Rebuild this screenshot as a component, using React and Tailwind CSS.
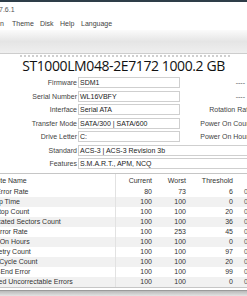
import React from "react";

const info = [
  ["Firmware", "SDM1", "----"],
  ["Serial Number", "WL16VBFY", "----"],
  ["Interface", "Serial ATA", "Rotation Rate"],
  ["Transfer Mode", "SATA/300 | SATA/600", "Power On Count"],
  ["Drive Letter", "C:", "Power On Hours"],
  ["Standard", "ACS-3 | ACS-3 Revision 3b", null],
  ["Features", "S.M.A.R.T., APM, NCQ", null],
];

const attrs = [
  ["Read Error Rate", 80, 73, 6],
  ["Spin-Up Time", 100, 100, 0],
  ["Start/Stop Count", 100, 100, 20],
  ["Reallocated Sectors Count", 100, 100, 36],
  ["Seek Error Rate", 100, 253, 45],
  ["Power-On Hours", 100, 100, 0],
  ["Spin Retry Count", 100, 100, 97],
  ["Power Cycle Count", 100, 100, 20],
  ["End-to-End Error", 100, 100, 99],
  ["Reported Uncorrectable Errors", 100, 100, 0],
];

const App = () => {
  return (
    <div className="w-[247px] h-[296px] overflow-hidden bg-white text-[#333] font-['Liberation_Sans',Arial,sans-serif] text-[7px] leading-none">
      {/* window frame top */}
      <div className="h-[2px] bg-[#2e3d48]" />

      {/* title bar */}
      <div className="h-[15px] flex items-center text-[#555] -ml-[1px]">7.6.1</div>

      {/* menu */}
      <div className="h-[13px] flex items-center text-[#444] whitespace-nowrap">
        <span className="w-[12px] shrink-0">n</span>
        <span className="w-[28px] shrink-0">Theme</span>
        <span className="w-[20px] shrink-0">Disk</span>
        <span className="w-[21px] shrink-0">Help</span>
        <span>Language</span>
      </div>

      {/* disk toolbar */}
      <div className="h-[24px] bg-gradient-to-b from-[#fbfbfb] via-[#e5e5e5] to-[#efefef] border-b border-[#cdcdcd]" />
      <div className="h-[3px] flex items-center">
        <div className="ml-[20px] w-[210px] h-[2px] bg-[repeating-linear-gradient(90deg,#cfcfcf_0_2px,transparent_2px_4px)]" />
      </div>

      {/* model title */}
      <div className="h-[18px] flex items-center justify-center text-[14px] tracking-[-0.4px] text-[#111] font-['Open_Sans','Liberation_Sans',sans-serif]">
        ST1000LM048-2E7172 1000.2 GB
      </div>

      {/* info rows */}
      <div className="flex flex-col pt-[1px]">
        {info.map(([label, value, right]) => (
          <div key={label} className="h-[13.5px] flex items-center whitespace-nowrap">
            <div className="w-[78px] shrink-0 text-right pr-[1px] text-[#444]">{label}</div>
            {right === null ? (
              <div className="w-[175px] shrink-0 h-[11px] border border-[#cfcfcf] flex items-center px-[1px] text-[#222]">
                {value}
              </div>
            ) : (
              <>
                <div className="w-[102px] shrink-0 h-[11px] border border-[#cfcfcf] flex items-center px-[1px] text-[#222]">
                  {value}
                </div>
                <div
                  className={
                    right === "----"
                      ? "w-[65px] shrink-0 text-right text-[#555]"
                      : "w-[72px] shrink-0 text-right text-[#444]"
                  }
                >
                  {right}
                </div>
              </>
            )}
          </div>
        ))}
      </div>

      {/* smart table */}
      <div className="mt-[2px] border-t border-b border-[#c6c6c6] whitespace-nowrap">
        <div className="h-[13px] flex items-center text-[#333]">
          <div className="w-[116px] shrink-0 h-full flex items-center border-r border-[#e2e2e2] overflow-hidden">
            <span className="-ml-[20px]">Attribute Name</span>
          </div>
          <div className="w-[36px] shrink-0 text-right">Current</div>
          <div className="w-[34px] shrink-0 text-right">Worst</div>
          <div className="w-[47px] shrink-0 text-right">Threshold</div>
          <div className="shrink-0 pl-[16px]">Raw Values</div>
        </div>
        {attrs.map(([name, cur, worst, th], i) => (
          <div
            key={name}
            className={
              i % 2 === 1
                ? "h-[10px] flex items-center bg-[#f1f1f1]"
                : "h-[10px] flex items-center bg-white"
            }
          >
            <div className="w-[116px] shrink-0 h-full flex items-center border-r border-[#e2e2e2] overflow-hidden">
              <span className="-ml-[22.5px]">{name}</span>
            </div>
            <div className="w-[36px] shrink-0 text-right">{cur}</div>
            <div className="w-[34px] shrink-0 text-right">{worst}</div>
            <div className="w-[47px] shrink-0 text-right">{th}</div>
            <div className="shrink-0 pl-[11px] text-[#555]">000000000000</div>
          </div>
        ))}
      </div>

      {/* status strip */}
      <div className="h-[2px]" />
      <div className="h-[6px] bg-gradient-to-b from-[#b9b9b9] to-[#e4e4e4] border-t border-[#9a9a9a]" />
    </div>
  );
};

export default App;
